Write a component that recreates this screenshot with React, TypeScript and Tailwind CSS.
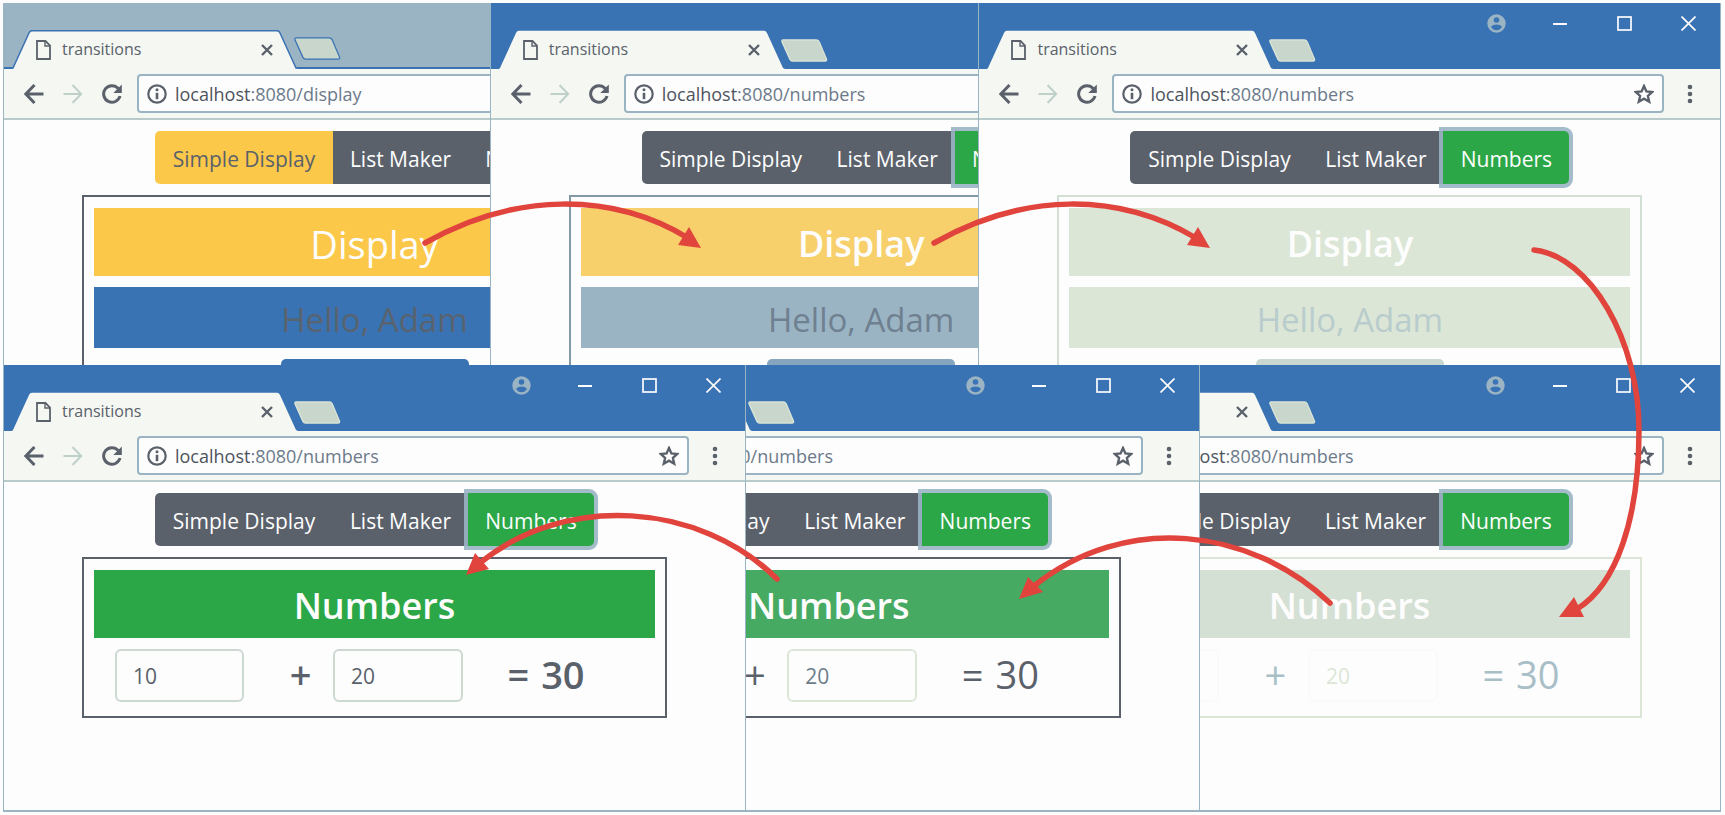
import React from "react";

type Panel = {
  path: string;
  page: "display" | "numbers";
  alignEnd?: boolean;
  inactive?: boolean;
  card: string;
  banner: string;
  title: string;
  greeting?: string;
  action?: string;
  field?: string;
  symbols?: string;
  result?: string;
};

const topRow: Panel[] = [
  {
    path: "display",
    page: "display",
    inactive: true,
    card: "border-[#5a616b]",
    banner: "bg-[#fcc84a]",
    title: "text-[38px] font-medium",
    greeting: "bg-[#3a73b4] text-[#58636f] font-medium",
    action: "bg-[#3a73b4]",
  },
  {
    path: "numbers",
    page: "display",
    card: "border-[#8299a8]",
    banner: "bg-[#f7d06c]",
    title: "text-[36px] font-semibold",
    greeting: "bg-[#9ab4c4] text-[#6f8090] font-normal",
    action: "bg-[#86a6c0]",
  },
  {
    path: "numbers",
    page: "display",
    card: "border-[#d3dfd5]",
    banner: "bg-[#dce6d6]",
    title: "text-[36px] font-semibold",
    greeting: "bg-[#dce6d6] text-[#b9cccd] font-normal",
    action: "bg-[#c8d7cf]",
  },
];

const bottomRow: Panel[] = [
  {
    path: "numbers",
    page: "numbers",
    card: "border-[#5a616b]",
    banner: "bg-[#2ca748]",
    title: "text-[36px] font-semibold",
    field: "border-[#ccd9d0] text-[#5a616b]",
    symbols: "font-semibold text-[#5a616b]",
    result: "font-semibold text-[#5a616b]",
  },
  {
    path: "numbers",
    page: "numbers",
    alignEnd: true,
    card: "border-[#5a616b]",
    banner: "bg-[#47aa62]",
    title: "text-[36px] font-semibold",
    field: "border-[#dce6d6] text-[#6f7d8a]",
    symbols: "font-normal text-[#5a616b]",
    result: "font-medium text-[#5a616b]",
  },
  {
    path: "numbers",
    page: "numbers",
    alignEnd: true,
    card: "border-[#dce6d6]",
    banner: "bg-[#d5e0d4]",
    title: "text-[36px] font-semibold",
    field: "border-[#fafbf9] text-[#dce6d6]",
    symbols: "font-normal text-[#a9bfc8]",
    result: "font-normal text-[#a9bfc8]",
  },
];

function TabStrip({ inactive }: { inactive?: boolean }) {
  const line = inactive ? "#3a73b4" : "none";
  return (
    <div
      className={
        inactive
          ? "flex h-[66px] items-end border-b-2 border-[#3a73b4] bg-[#9ab4c4] pl-2"
          : "flex h-[66px] items-end bg-[#3a73b4] pl-2"
      }
    >
      <div className={inactive ? "relative -mb-0.5 h-[39px] w-[286px] shrink-0" : "relative h-[39px] w-[286px] shrink-0"}>
        <svg className="absolute inset-0" width="286" height="39" viewBox="0 0 286 39" aria-hidden="true">
          <path d="M0 39 L1 38 L17 3 Q18 .7 20 .7 H265 Q267 .7 268 3 L284 38 L286 39 Z" fill="#f5f8f2" />
          <path d="M0 38 H1 L17 3 Q18 .7 20 .7 H265 Q267 .7 268 3 L284 38 H286" fill="none" stroke={line} strokeWidth="1.5" />
        </svg>
        <div className="relative flex h-full items-center pl-6 pr-[25px]">
          <svg width="15" height="20" viewBox="0 0 15 20" fill="none" stroke="#5a616b" strokeWidth="1.8" aria-hidden="true">
            <path d="M1 1 H9.5 L14 5.5 V19 H1 Z" />
            <path d="M9 1 V6 H14" strokeWidth="1.4" />
          </svg>
          <span className="ml-[11px] flex-1 pb-0.5 text-base leading-5 font-medium text-[#5a616b]">transitions</span>
          <button type="button" aria-label="Close tab" className="p-0">
            <svg width="12" height="12" viewBox="0 0 12 12" stroke="#5a616b" strokeWidth="2.4" aria-hidden="true">
              <path d="M1 1 L11 11 M11 1 L1 11" />
            </svg>
          </button>
        </div>
      </div>
      <button type="button" aria-label="New tab" className="-ml-1 mb-[7px] shrink-0">
        <svg width="47" height="23" viewBox="0 0 48 24" preserveAspectRatio="none" aria-hidden="true">
          <path d="M2 1 H36 Q38 1 39 3 L46.500 21 Q47 23 45 23 H12 Q10 23 9 21 L1 3 Q.5 1 2 1 Z" fill="#c8d6cc" stroke={inactive ? "#3a73b4" : "#dce6d6"} strokeWidth="1.300" />
        </svg>
      </button>
      <div className="ml-auto flex h-10 self-start">
        <button type="button" aria-label="Profile" className="flex w-16 items-center justify-center">
          <svg width="19" height="19" viewBox="0 0 19 19" aria-hidden="true">
            <circle cx="9.5" cy="9.5" r="9.200" fill="#9ab4c4" />
            <circle cx="9.5" cy="6" r="2.800" fill="#3a73b4" />
            <path d="M4 12.800 Q6 10.500 9.500 10.500 T15 12.800 Q13 16.300 9.500 16.300 T4 12.800 Z" fill="#3a73b4" />
          </svg>
        </button>
        <button type="button" aria-label="Minimize" className="flex w-16 items-center justify-center">
          <svg width="14" height="14" viewBox="0 0 14 14" aria-hidden="true">
            <path d="M0 8 H14" stroke="#fdfdfd" strokeWidth="2" />
          </svg>
        </button>
        <button type="button" aria-label="Maximize" className="flex w-16 items-center justify-center">
          <svg width="15" height="15" viewBox="0 0 15 15" aria-hidden="true">
            <rect x="1" y="1" width="13" height="13" fill="none" stroke="#fdfdfd" strokeWidth="1.700" />
          </svg>
        </button>
        <button type="button" aria-label="Close window" className="flex w-16 items-center justify-center">
          <svg width="15" height="15" viewBox="0 0 15 15" aria-hidden="true">
            <path d="M.5 .5 L14.500 14.500 M14.500 .5 L.5 14.500" stroke="#fdfdfd" strokeWidth="1.700" />
          </svg>
        </button>
      </div>
    </div>
  );
}

function Toolbar({ path }: { path: string }) {
  return (
    <div className="flex h-[51px] items-center border-b-2 border-[#b9cacb] bg-[#f5f8f2] pl-5">
      <button type="button" aria-label="Back">
        <svg width="20" height="20" viewBox="0 0 20 20" fill="none" stroke="#5a616b" strokeWidth="3" aria-hidden="true">
          <path d="M19.500 10 H2 M10.500 1 L1.800 10 L10.500 19" />
        </svg>
      </button>
      <button type="button" aria-label="Forward" className="ml-[19px]">
        <svg width="20" height="20" viewBox="0 0 20 20" fill="none" stroke="#bfd0cb" strokeWidth="2" aria-hidden="true">
          <path d="M.5 10 H18 M9.500 1 L18.200 10 L9.500 19" />
        </svg>
      </button>
      <button type="button" aria-label="Reload" className="ml-[19px]">
        <svg width="20" height="20" viewBox="0 0 20 20" aria-hidden="true">
          <path d="M16.200 4.500 A8.300 8.300 0 1 0 18 12" fill="none" stroke="#5a616b" strokeWidth="3" />
          <path d="M19.800 .5 V9 H11.300 Z" fill="#5a616b" />
        </svg>
      </button>
      <div className="ml-[15px] flex h-[39px] flex-1 items-center rounded-[4px] border-2 border-[#9ab4c4] bg-[#fdfdfd] pr-2 pl-2">
        <svg width="20" height="20" viewBox="0 0 20 20" aria-hidden="true">
          <circle cx="10" cy="10" r="8.700" fill="none" stroke="#5a616b" strokeWidth="2.200" />
          <path d="M10 8.800 V15.200" stroke="#5a616b" strokeWidth="2.600" />
          <circle cx="10" cy="5.800" r="1.500" fill="#5a616b" />
        </svg>
        <div role="textbox" aria-label="Address" aria-readonly="true" className="ml-2 flex-1 text-lg leading-6 text-[#6c7a8a]">
          <span className="font-medium text-[#4d545e]">localhost</span>:8080/{path}
        </div>
        <button type="button" aria-label="Bookmark">
          <svg width="20" height="20" viewBox="0 0 20 20" aria-hidden="true">
            <path d="M10 2 L12.400 7.400 L18.300 8 L13.900 11.900 L15.200 17.700 L10 14.700 L4.800 17.700 L6.100 11.900 L1.700 8 L7.600 7.400 Z" fill="none" stroke="#5a616b" strokeWidth="2.400" />
          </svg>
        </button>
      </div>
      <button type="button" aria-label="Menu" className="mr-5 ml-4">
        <svg width="20" height="20" viewBox="0 0 20 20" fill="#5a616b" aria-hidden="true">
          <circle cx="10" cy="3" r="2.300" />
          <circle cx="10" cy="10" r="2.300" />
          <circle cx="10" cy="17" r="2.300" />
        </svg>
      </button>
    </div>
  );
}

function PageNav({ active }: { active: string }) {
  const onDisplay = active === "display";
  return (
    <nav className="mx-auto mt-[11px] flex h-[53px] w-[439px] text-[21px] leading-6 text-[#fdfdfd]">
      <button
        type="button"
        className={
          onDisplay
            ? "w-[178px] rounded-l-[5px] bg-[#fcc84a] pt-0.5 text-[#5a616b]"
            : "w-[178px] rounded-l-[5px] bg-[#5a616b] pt-0.5"
        }
      >
        Simple Display
      </button>
      <button type="button" className="w-[135px] bg-[#5a616b] pt-0.5">List Maker</button>
      <button
        type="button"
        className={
          onDisplay
            ? "w-[126px] rounded-r-[5px] bg-[#5a616b] pt-0.5"
            : "w-[126px] rounded-r-[5px] bg-[#2ca748] pt-0.5 ring-4 ring-[#9ab4c4]/90"
        }
      >
        Numbers
      </button>
    </nav>
  );
}

function BrowserWindow({ panel }: { panel: Panel }) {
  return (
    <article className="w-[741px] shrink-0">
      <TabStrip inactive={panel.inactive} />
      <Toolbar path={panel.path} />
      <PageNav active={panel.path} />
      <section className={`mx-auto mt-[11px] w-[585px] border-2 p-2.5 pt-[11px] ${panel.card}`}>
        <h2 className={`flex h-[68px] items-center justify-center pt-1 leading-[52px] text-[#fdfdfd] ${panel.banner} ${panel.title}`}>
          {panel.page === "display" ? "Display" : "Numbers"}
        </h2>
        {panel.page === "display" ? (
          <>
            <p className={`mt-[11px] flex h-[61px] items-center justify-center pt-1 text-[33px] leading-[44px] ${panel.greeting}`}>Hello, Adam</p>
            <div className={`mx-auto mt-[11px] h-[53px] w-[188px] rounded-[5px] ${panel.action}`} />
          </>
        ) : (
          <div className="mt-[11px] mb-1 flex items-center pr-[26px] pl-[21px]">
            <input
              aria-label="First number"
              defaultValue="10"
              className={`h-[53px] w-[129px] rounded-[6px] border-2 bg-transparent px-4 text-[21px] ${panel.field}`}
            />
            <span className={`w-[89px] pl-6 pb-1 text-center text-[38px] leading-[44px] ${panel.symbols}`}>+</span>
            <input
              aria-label="Second number"
              defaultValue="20"
              className={`h-[53px] w-[130px] rounded-[6px] border-2 bg-transparent px-4 text-[21px] ${panel.field}`}
            />
            <output className={`flex flex-1 items-center justify-center gap-3 pb-1 text-[38px] leading-[44px] ${panel.result}`}>
              <span>=</span>
              <span>30</span>
            </output>
          </div>
        )}
      </section>
    </article>
  );
}

function PanelCell({ panel }: { panel: Panel }) {
  return (
    <div
      className={
        panel.alignEnd
          ? "flex justify-end overflow-hidden border-l border-[#9ab4c4]"
          : "flex justify-start overflow-hidden border-l border-[#9ab4c4]"
      }
    >
      <BrowserWindow panel={panel} />
    </div>
  );
}

function FlowArrows() {
  return (
    <svg className="pointer-events-none absolute inset-0 h-full w-full" viewBox="0 0 1725 815" preserveAspectRatio="none" aria-hidden="true">
      <g fill="none" stroke="#e0443c" strokeWidth="5.500" strokeLinecap="round">
        <path d="M425 243 C515 192 612 192 688 238" />
        <path d="M934 243 C1024 192 1118 192 1196 238" />
        <path d="M1534 250 C1590 256 1639 340 1639 430 S1616 585 1577 609" />
        <path d="M1330 603 C1250 527 1125 513 1034 586" />
        <path d="M777 579 C700 502 565 493 480 563" />
      </g>
      <g fill="#e0443c">
        <path d="M689 227 L701 248 L678 245 Z" />
        <path d="M1198 227 L1210 248 L1187 245 Z" />
        <path d="M1574 597 L1559 617 L1584 617 Z" />
        <path d="M1028 577 L1019 599 L1043 592 Z" />
        <path d="M475 553 L466 575 L489 569 Z" />
      </g>
    </svg>
  );
}

export default function App() {
  return (
    <main className="relative min-h-[815px] overflow-hidden bg-[#fdfdfd] pt-[3px] pr-1 pb-[3px] pl-[3px] font-['Open_Sans','Noto_Sans',sans-serif]">
      <div className="grid h-[362px] grid-cols-[minmax(0,487fr)_minmax(0,489fr)_minmax(0,742fr)] overflow-hidden border-r border-[#9ab4c4]">
        {topRow.map((panel, i) => (
          <PanelCell key={i} panel={panel} />
        ))}
      </div>
      <div className="grid min-h-[447px] grid-cols-[minmax(0,742fr)_minmax(0,455fr)_minmax(0,521fr)] border-r border-b-2 border-[#9ab4c4]">
        {bottomRow.map((panel, i) => (
          <PanelCell key={i} panel={panel} />
        ))}
      </div>
      <FlowArrows />
    </main>
  );
}
